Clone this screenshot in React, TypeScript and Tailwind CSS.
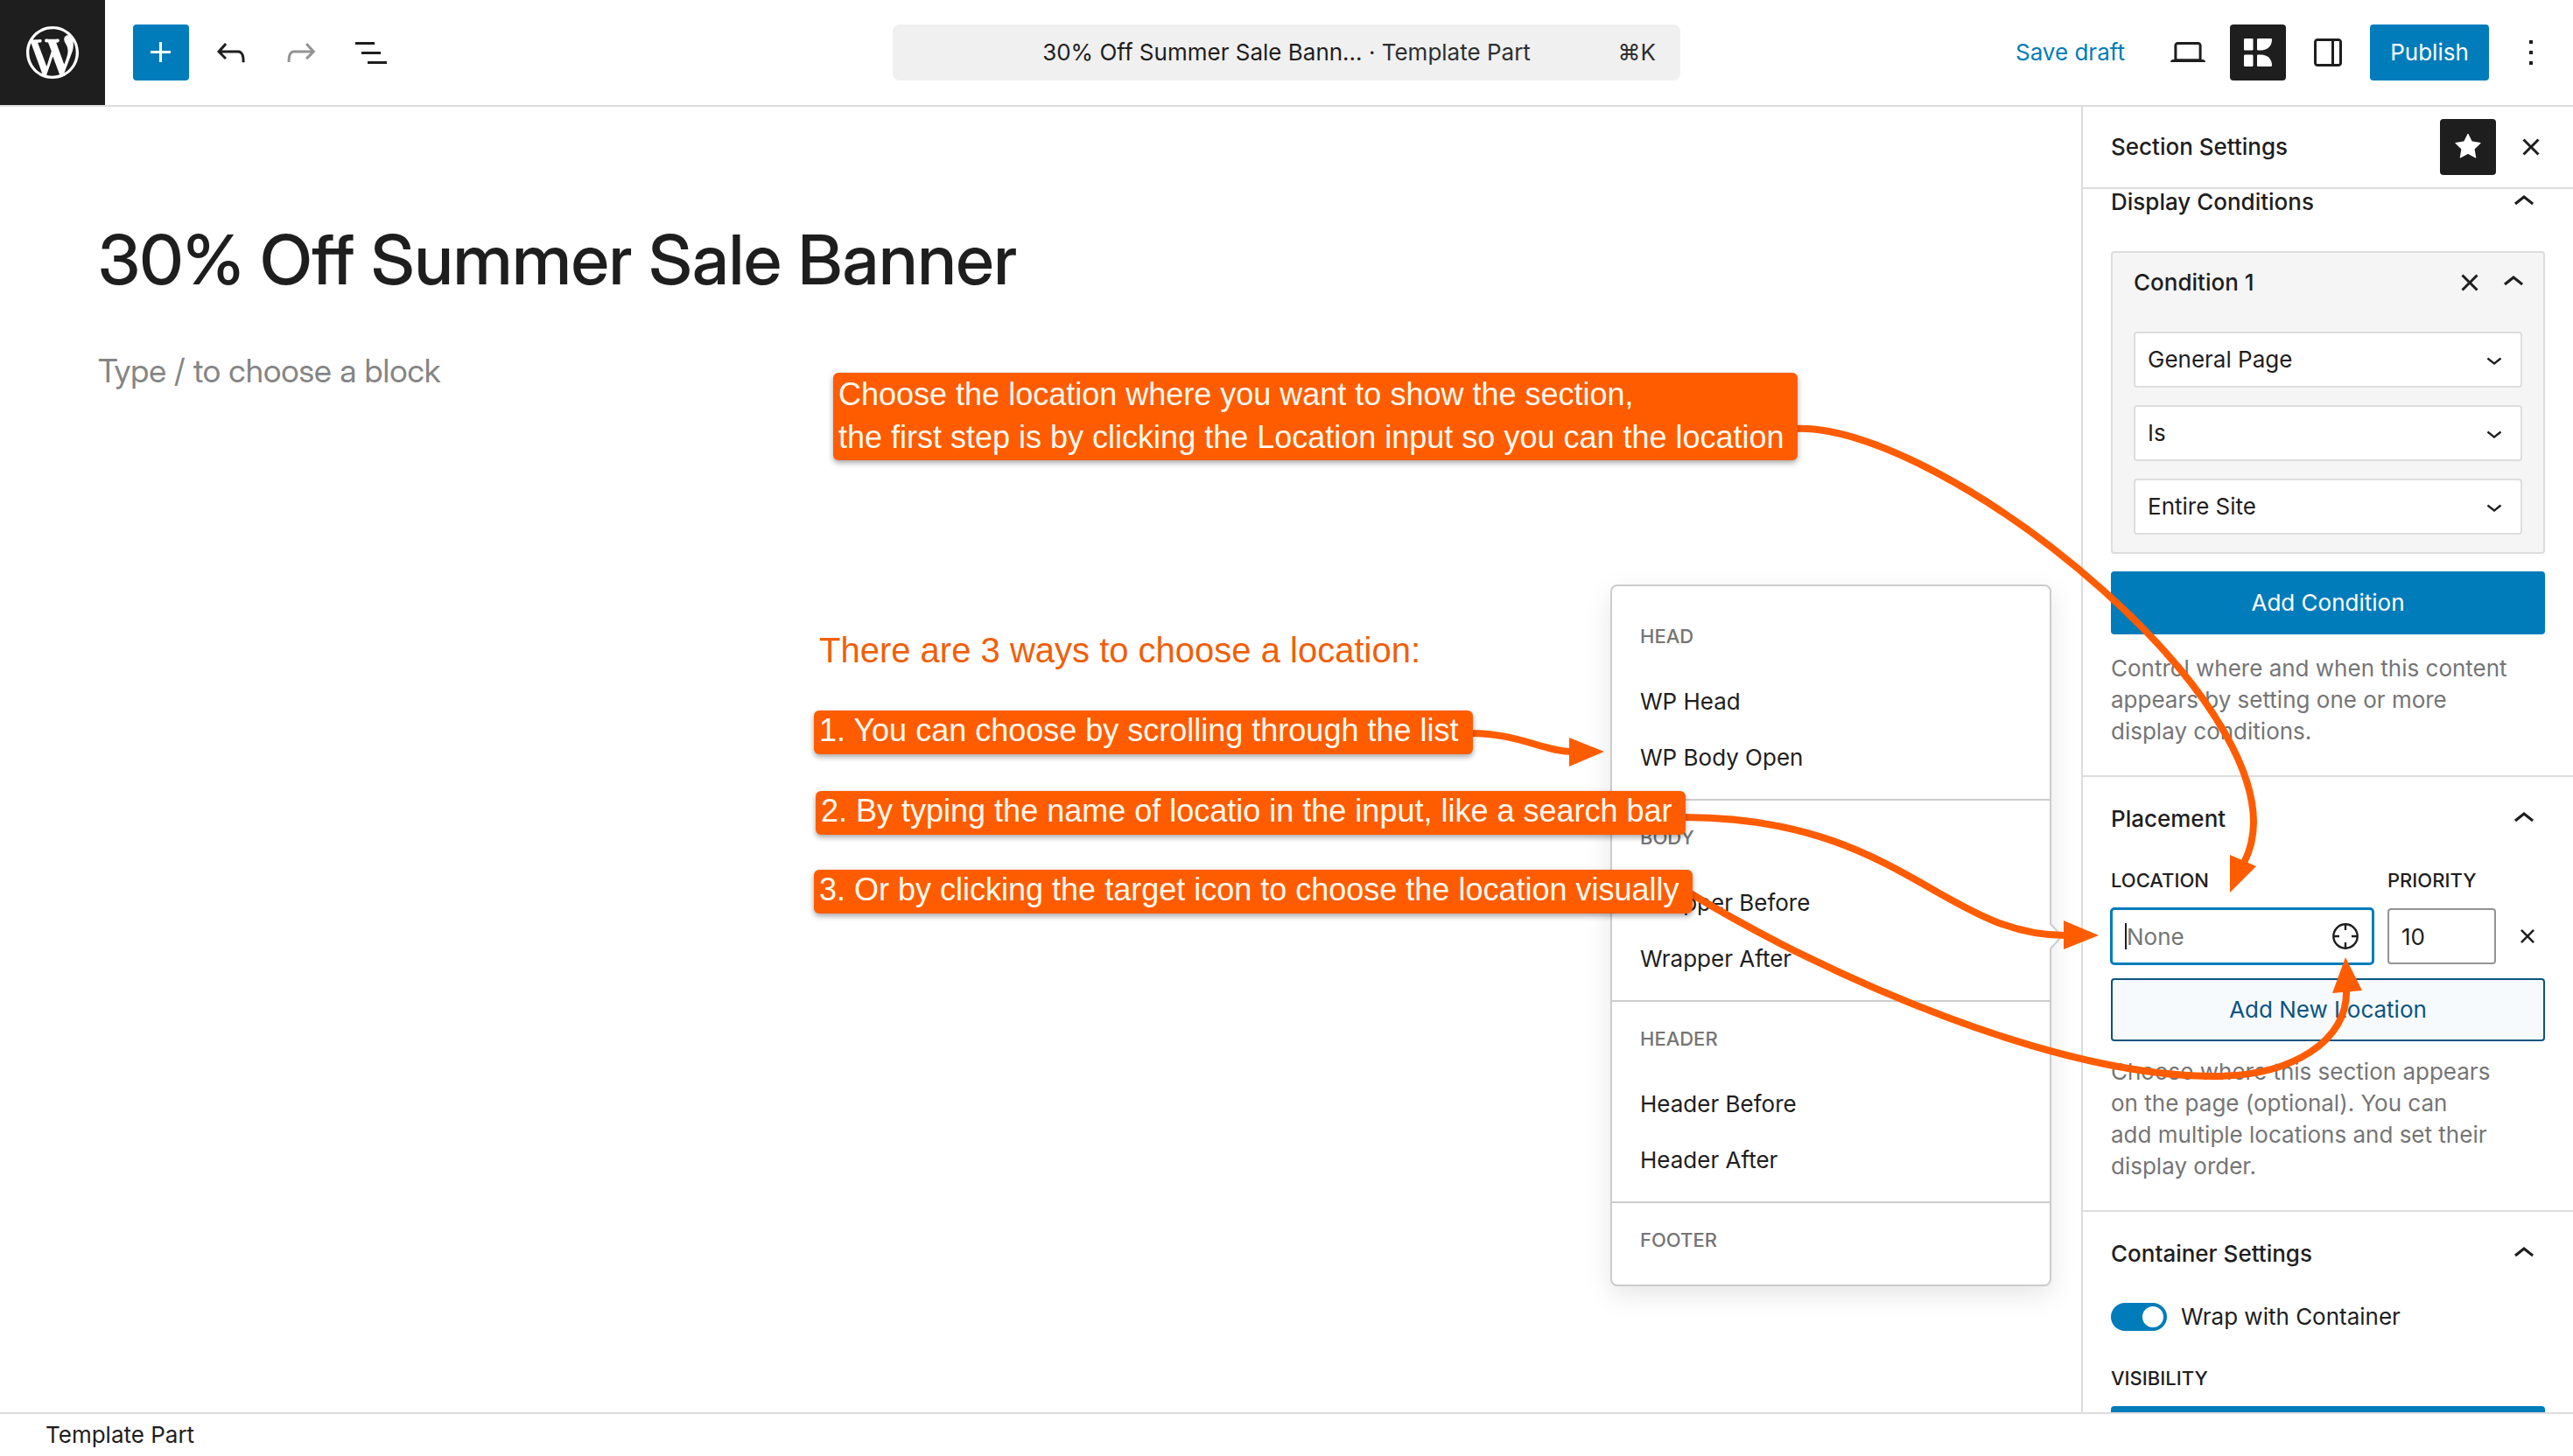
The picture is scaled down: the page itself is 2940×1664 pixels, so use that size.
import React from "react";

const P = {
  wp: "M20 10c0-5.51-4.49-10-10-10C4.48 0 0 4.49 0 10c0 5.52 4.48 10 10 10 5.51 0 10-4.48 10-10zM7.78 15.37L4.37 6.22c.55-.02 1.17-.08 1.17-.08.5-.06.44-1.13-.06-1.11 0 0-1.45.11-2.37.11-.18 0-.37 0-.58-.01C4.12 2.69 6.87 1.11 10 1.11c2.33 0 4.45.87 6.05 2.34-.68-.11-1.65.39-1.65 1.58 0 .74.45 1.36.9 2.1.35.61.55 1.36.55 2.46 0 1.49-1.4 5-1.4 5l-3.03-8.37c.54-.02.82-.17.82-.17.5-.05.44-1.25-.06-1.22 0 0-1.44.12-2.38.12-.87 0-2.33-.12-2.33-.12-.5-.03-.56 1.2-.06 1.22l.92.08 1.26 3.41zM17.41 10c.24-.64.74-1.87.43-4.25.7 1.29 1.05 2.71 1.05 4.25 0 3.29-1.73 6.24-4.4 7.78.97-2.59 1.94-5.2 2.92-7.78zM6.1 18.09C3.12 16.65 1.11 13.53 1.11 10c0-1.3.23-2.48.72-3.59C3.25 10.3 4.67 14.2 6.1 18.09zm4.03-6.63l2.58 6.98c-.86.29-1.76.45-2.71.45-.79 0-1.57-.11-2.29-.33.81-2.38 1.62-4.74 2.42-7.1z",
  plus: "M11 12.5V17.5H12.5V12.5H17.5V11H12.5V6H11V11H6V12.5H11Z",
  undo: "M18.3 11.7c-.6-.6-1.4-.9-2.3-.9H6.7l2.9-3.3-1.1-1-4.5 5L8.5 16l1-1-2.7-2.7H16c.5 0 .9.2 1.3.5 1 1 1 3.4 1 4.5v.3h1.5v-.2c0-1.5 0-4.3-1.5-5.7z",
  redo: "M15.6 6.5l-1.1 1 2.9 3.3H8c-.9 0-1.7.3-2.3.9-1.4 1.5-1.4 4.2-1.4 5.6v.2h1.5v-.3c0-1.1 0-3.5 1-4.5.3-.3.7-.5 1.3-.5h9.2L14.5 15l1.1 1.1 4.6-4.6-4.6-5z",
  list: "M3 6h11v1.5H3V6Zm3.5 5.5h11V13h-11v-1.5ZM21 17H10v1.5h11V17Z",
  close:
    "M12 13.06l3.712 3.713 1.061-1.06L13.061 12l3.712-3.712-1.06-1.06L12 10.938 8.288 7.227l-1.061 1.06L10.939 12l-3.712 3.712 1.06 1.061L12 13.061z",
  up: "M6.5 12.4L12 8l5.5 4.4-.9 1.2L12 10l-4.5 3.6-1-1.2z",
  down: "M17.5 11.6L12 16l-5.5-4.4.9-1.2L12 14l4.5-3.6 1 1.2z",
  desktop:
    "M20.5 16h-.7V8c0-1.1-.9-2-2-2H6.2c-1.1 0-2 .9-2 2v8h-.7c-.8 0-1.5.7-1.5 1.5h20c0-.8-.7-1.5-1.5-1.5zM5.7 8c0-.3.2-.5.5-.5h11.6c.3 0 .5.2.5.5v7.6H5.7V8z",
  drawer:
    "M18 4H6c-1.1 0-2 .9-2 2v12c0 1.1.9 2 2 2h12c1.1 0 2-.9 2-2V6c0-1.1-.9-2-2-2zm-4 14.5H6c-.3 0-.5-.2-.5-.5V6c0-.3.2-.5.5-.5h8v13zm4.5-.5c0 .3-.2.5-.5.5h-2.5v-13H18c.3 0 .5.2.5.5v12z",
  more: "M13 19h-2v-2h2v2zm0-6h-2v-2h2v2zm0-6h-2V5h2v2z",
  star: "M11.776 4.454a.25.25 0 01.448 0l2.069 4.192a.25.25 0 00.188.137l4.626.672a.25.25 0 01.139.426l-3.348 3.263a.25.25 0 00-.072.222l.79 4.607a.25.25 0 01-.362.263l-4.138-2.175a.25.25 0 00-.232 0l-4.138 2.175a.25.25 0 01-.363-.263l.79-4.607a.25.25 0 00-.071-.222L4.754 9.881a.25.25 0 01.139-.426l4.626-.672a.25.25 0 00.188-.137l2.069-4.192z",
};

function Icon({ d, className = "size-12" }: { d: string; className?: string }) {
  return (
    <svg viewBox="0 0 24 24" className={className} fill="currentColor" aria-hidden="true">
      <path d={d} />
    </svg>
  );
}

function IconButton({
  label,
  d,
  className = "",
  disabled,
}: {
  label: string;
  d: string;
  className?: string;
  disabled?: boolean;
}) {
  return (
    <button
      type="button"
      aria-label={label}
      disabled={disabled}
      className={"flex size-16 shrink-0 items-center justify-center rounded-sm " + className}
    >
      <Icon d={d} />
    </button>
  );
}

function TopBar() {
  return (
    <header className="relative flex h-[122px] shrink-0 items-center border-b-2 border-[#dddddd] pr-4">
      <a
        href="#dashboard"
        aria-label="View Template Parts"
        className="flex size-[120px] items-center justify-center bg-[#1e1e1e] text-white"
      >
        <svg viewBox="0 0 20 20" className="size-[60px]" fill="currentColor" aria-hidden="true">
          <path d={P.wp} />
        </svg>
      </a>
      <div className="ml-8 flex gap-4">
        <IconButton label="Block Inserter" d={P.plus} className="bg-[#007cba] text-white" />
        <IconButton label="Undo" d={P.undo} />
        <IconButton label="Redo" d={P.redo} disabled className="text-[#949494]" />
        <IconButton label="Document Overview" d={P.list} />
      </div>
      <button
        type="button"
        className="absolute left-1/2 flex h-16 w-[900px] -translate-x-1/2 items-center justify-center rounded-lg bg-[#f0f0f0]"
      >
        <span>
          30% Off Summer Sale Bann...&nbsp;· <span className="text-[#2f2f2f]">Template Part</span>
        </span>
        <span className="absolute right-7 text-[#2f2f2f]">⌘K</span>
      </button>
      <div className="ml-auto flex items-center gap-4">
        <button type="button" className="h-16 px-6 text-[#007cba]">
          Save draft
        </button>
        <IconButton label="View" d={P.desktop} />
        <button
          type="button"
          aria-label="Kadence"
          className="flex size-16 items-center justify-center rounded-sm bg-[#1e1e1e] text-white"
        >
          <svg viewBox="0 0 32 32" className="size-8" fill="currentColor" aria-hidden="true">
            <path d="M1.2 0H9.3Q10.5 0 10.5 1.2V12.2Q10.5 13.4 9.3 13.4H1.2Q0 13.4 0 12.2V1.2Q0 0 1.2 0Z" />
            <path d="M1.2 18.6H9.3Q10.5 18.6 10.5 19.8V30.8Q10.5 32 9.3 32H1.2Q0 32 0 30.8V19.8Q0 18.6 1.2 18.6Z" />
            <path d="M16.2 0H30.8Q32 0 32 1.2C32 8.5 27 13.4 19.5 13.4H16.2Q15 13.4 15 12.2V1.2Q15 0 16.2 0Z" />
            <path d="M16.2 18.6H19.5C27 18.6 32 23.5 32 30.8Q32 32 30.8 32H16.2Q15 32 15 30.8V19.8Q15 18.6 16.2 18.6Z" />
          </svg>
        </button>
        <IconButton label="Settings" d={P.drawer} />
        <button type="button" className="h-16 w-[136px] rounded-sm bg-[#007cba] text-white">
          Publish
        </button>
        <IconButton label="Options" d={P.more} />
      </div>
    </header>
  );
}

function SelectBox({ label, value }: { label: string; value: string }) {
  return (
    <label className="relative block">
      <span className="sr-only">{label}</span>
      <select className="block h-16 w-full appearance-none rounded-sm border-2 border-[#dddddd] bg-white px-[14px]">
        <option>{value}</option>
      </select>
      <Icon d={P.down} className="pointer-events-none absolute top-[14px] right-[14px] size-9" />
    </label>
  );
}

function PanelTitle({ children }: { children: React.ReactNode }) {
  return (
    <h2 className="font-medium">
      <button type="button" className="flex h-24 w-full items-center justify-between">
        {children}
        <Icon d={P.up} />
      </button>
    </h2>
  );
}

function Sidebar() {
  return (
    <aside className="flex w-[562px] shrink-0 flex-col border-l-2 border-[#dddddd]">
      <div className="flex h-[94px] shrink-0 items-center gap-2 border-b-2 border-[#dddddd] pr-4 pl-8">
        <h2 className="mr-auto font-medium">Section Settings</h2>
        <IconButton label="Pin" d={P.star} className="bg-[#1e1e1e] text-white" />
        <IconButton label="Close" d={P.close} />
      </div>
      <div className="min-h-0 flex-1 overflow-hidden">
        <section className="border-b-2 border-[#dddddd] px-8 pb-8">
          <h2 className="font-medium">
            <button type="button" className="flex h-[30px] w-full items-center justify-between">
              Display Conditions
              <Icon d={P.up} />
            </button>
          </h2>
          <div className="mt-[41px] rounded-sm border-2 border-[#dddddd] bg-[#f5f5f5] px-6 pb-5">
            <div className="flex h-[90px] items-center gap-0.5 pb-[22px]">
              <h3 className="mr-auto font-medium">Condition 1</h3>
              <button type="button" aria-label="Remove condition">
                <Icon d={P.close} />
              </button>
              <button type="button" aria-label="Collapse condition" className="-mr-3.5">
                <Icon d={P.up} />
              </button>
            </div>
            <div className="flex flex-col gap-5">
              <SelectBox label="Condition type" value="General Page" />
              <SelectBox label="Comparison" value="Is" />
              <SelectBox label="Target" value="Entire Site" />
            </div>
          </div>
          <button type="button" className="mt-5 h-[72px] w-full rounded-sm bg-[#007cba] text-white">
            Add Condition
          </button>
          <p className="mt-[21px] pr-8 leading-9 text-[#757575]">
            Control where and when this content appears by setting one or more display conditions.
          </p>
        </section>

        <section className="border-b-2 border-[#dddddd] px-8 pb-8">
          <PanelTitle>Placement</PanelTitle>
          <div className="flex items-end">
            <div className="w-[300px]">
              <label htmlFor="location" className="block h-[54px] pt-[6px] text-[22px] leading-8 font-medium">
                LOCATION
              </label>
              <div className="relative">
                <input
                  id="location"
                  type="text"
                  placeholder="None"
                  className="block h-16 w-full rounded-sm bg-white px-[18px] outline-[3px] -outline-offset-2 outline-[#007cba] placeholder:text-[#757575]"
                />
                <span className="absolute top-[17px] left-4 h-[30px] w-[2px] bg-[#1e1e1e]" />
                <button type="button" aria-label="Choose location visually" className="absolute top-4 right-4">
                  <svg
                    viewBox="0 0 32 32"
                    className="size-8"
                    fill="none"
                    stroke="currentColor"
                    strokeWidth="2.4"
                    aria-hidden="true"
                  >
                    <circle cx="16" cy="16" r="13.7" />
                    <path d="M16 2V9M16 23V30M2 16H9M23 16H30" />
                  </svg>
                </button>
              </div>
            </div>
            <div className="ml-4 w-[124px]">
              <label htmlFor="priority" className="block h-[54px] pt-[6px] text-[22px] leading-8 font-medium">
                PRIORITY
              </label>
              <input
                id="priority"
                type="text"
                defaultValue="10"
                className="block h-16 w-full rounded-sm border-2 border-[#949494] bg-white px-[14px]"
              />
            </div>
            <button type="button" aria-label="Remove location" className="ml-auto flex h-16 items-center">
              <Icon d={P.close} className="size-10" />
            </button>
          </div>
          <button
            type="button"
            className="mt-4 h-[72px] w-full rounded-sm border-2 border-[#0b5480] bg-[#f6fafd] text-[#0b5480]"
          >
            Add New Location
          </button>
          <p className="mt-[17px] leading-9 text-[#757575]">
            Choose where this section appears
            <br />
            on the page (optional). You can
            <br />
            add multiple locations and set their
            <br />
            display order.
          </p>
        </section>

        <section className="px-8">
          <PanelTitle>Container Settings</PanelTitle>
          <label className="mt-2 flex h-8 items-center gap-4">
            <input type="checkbox" role="switch" defaultChecked className="peer sr-only" />
            <span className="flex h-8 w-16 items-center justify-end rounded-full bg-[#007cba] p-1">
              <span className="size-6 rounded-full bg-white" />
            </span>
            Wrap with Container
          </label>
          <h3 className="mt-[38px] text-[22px] leading-8 font-medium">VISIBILITY</h3>
          <button type="button" aria-label="Visibility" className="mt-4 h-16 w-full rounded-sm bg-[#007cba]" />
        </section>
      </div>
    </aside>
  );
}

const groups = [
  { title: "HEAD", items: ["WP Head", "WP Body Open"] },
  { title: "BODY", items: ["Wrapper Before", "Wrapper After"] },
  { title: "HEADER", items: ["Header Before", "Header After"] },
  { title: "FOOTER", items: [] },
];

function LocationPopover() {
  return (
    <div className="absolute top-[546px] right-[34px] w-[504px] rounded-lg border-2 border-[#cccccc] bg-white pt-[15px] shadow-[0_10px_30px_rgba(0,0,0,0.1)]">
      <svg viewBox="0 0 16 28" className="absolute top-[386px] -right-4 h-7 w-4" aria-hidden="true">
        <path d="M0 0L3 2L14 14L3 26L0 28Z" fill="#fff" />
        <path d="M1 0L14 14L1 28" fill="none" stroke="#ccc" strokeWidth="2" />
      </svg>
      {groups.map((g) => (
        <div key={g.title} className="border-b-2 border-[#cccccc] pb-[15px] last:border-b-0 last:pb-2">
          <h3 className="h-[85px] px-8 pt-6 text-[22px] leading-9 font-medium text-[#757575]">{g.title}</h3>
          {g.items.map((i) => (
            <button key={i} type="button" className="block h-16 w-full px-8 text-left">
              {i}
            </button>
          ))}
        </div>
      ))}
    </div>
  );
}

function Callout({ className, children }: { className: string; children: React.ReactNode }) {
  return (
    <div
      className={
        "absolute rounded-md bg-[#ff5c00] px-[6px] text-[36px] whitespace-nowrap text-[#fffaf0] shadow-[0_3px_6px_rgba(0,0,0,0.35)] " +
        className
      }
    >
      {children}
    </div>
  );
}

function Annotations() {
  return (
    <div className="pointer-events-none absolute inset-0 font-['Liberation_Sans',Arial,sans-serif]">
      <svg viewBox="0 0 2940 1664" className="absolute top-0 left-0 h-[1664px] w-[2940px]" aria-hidden="true">
        <g fill="none" stroke="#ff5c00" strokeWidth="8">
          <path d="M2050 490C2220 480 2648 825 2564 986" />
          <path d="M1680 838C1735 838 1765 859 1796 859" />
          <path d="M1924 934C2170 934 2220 1069 2360 1069" />
          <path d="M1930 1020C2090 1118 2350 1230 2530 1230C2618 1230 2684 1190 2681 1130" />
        </g>
        <g fill="#ff5c00">
          <path d="M2548 1020V977L2578 990Z" />
          <path d="M1833 859L1793 843V876Z" />
          <path d="M2398 1069L2358 1052V1085Z" />
          <path d="M2680 1094L2665 1135L2699 1132Z" />
        </g>
      </svg>
      <Callout className="top-[426px] left-[952px] w-[1102px] pb-[2px] leading-[49px]">
        Choose the location where you want to show the section,
        <br />
        the first step is by clicking the Location input so you can the location
      </Callout>
      <p className="absolute top-[719px] left-[936px] text-[40px] leading-[48px] whitespace-nowrap text-[#f05f0a]">
        There are 3 ways to choose a location:
      </p>
      <Callout className="top-[812px] left-[930px] w-[753px] pb-1 leading-[46px]">
        1. You can choose by scrolling through the list
      </Callout>
      <Callout className="top-[904px] left-[932px] w-[994px] pb-1 leading-[46px]">
        2. By typing the name of locatio in the input, like a search bar
      </Callout>
      <Callout className="top-[994px] left-[930px] w-[1004px] pb-1 leading-[46px]">
        3. Or by clicking the target icon to choose the location visually
      </Callout>
    </div>
  );
}

export default function App() {
  return (
    <div className="relative flex h-screen flex-col overflow-hidden bg-white font-[Inter,sans-serif] text-[26px] leading-9 text-[#1e1e1e]">
      <TopBar />
      <div className="flex min-h-0 flex-1">
        <main className="relative min-w-0 flex-1 px-28 pt-[126px]">
          <h1 className="font-['Inter_Display',Inter,sans-serif] text-[79px] leading-[96px] font-medium">
            30% Off Summer Sale Banner
          </h1>
          <p className="mt-14 font-['Inter_Display',Inter,sans-serif] text-[37px] leading-[48px] text-[#858585]">
            Type / to choose a block
          </p>
          <LocationPopover />
        </main>
        <Sidebar />
      </div>
      <footer className="flex h-[50px] shrink-0 items-center border-t-2 border-[#dddddd] px-[52px]">Template Part</footer>
      <Annotations />
    </div>
  );
}
